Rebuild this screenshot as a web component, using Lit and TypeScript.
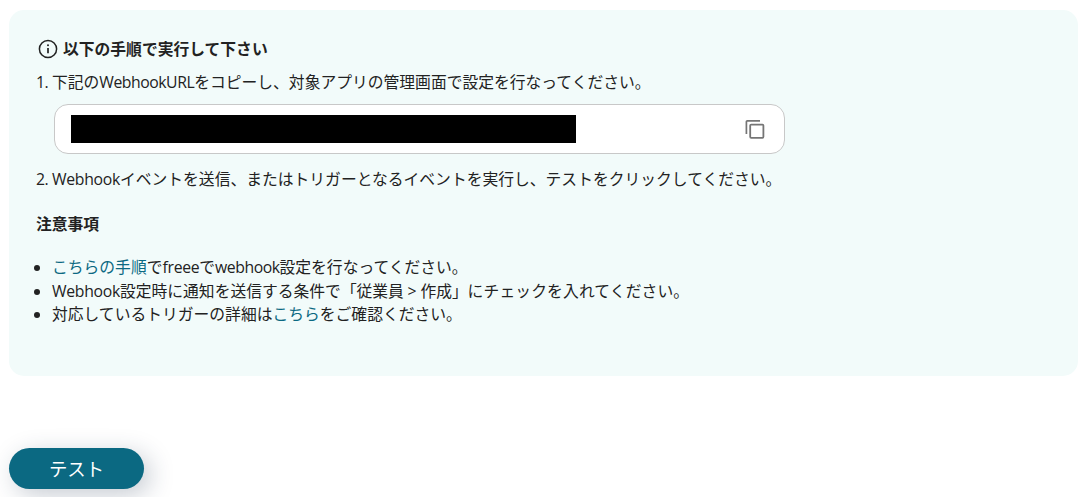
import { LitElement, html, css, svg } from "lit";

const infoIcon = svg`
  <circle cx="10" cy="10" r="8.6" fill="none" stroke="currentColor" stroke-width="1.5" />
  <path d="M10 9v5.2" stroke="currentColor" stroke-width="1.7" />
  <circle cx="10" cy="6.2" r="1" fill="currentColor" />
`;

const copyIcon = svg`
  <path d="M1.4 15V2.9q0-1 1-1H15" fill="none" stroke="currentColor" stroke-width="1.7" />
  <rect x="5.2" y="5.6" width="13.2" height="13.2" rx="1" fill="none" stroke="currentColor" stroke-width="1.8" />
`;

export class AppRoot extends LitElement {

  static get styles() {
    return css`
      :host {
        display: block;
        height: 497px;
        overflow: hidden;
        box-sizing: border-box;
        padding: 10px 8px 0 9px;
        background: #fff;
        color: #222;
        font-family: "Open Sans", "Noto Sans CJK JP", sans-serif;
        font-size: 15.79px;
        line-height: 24px;
        white-space: nowrap;
      }
      .card {
        box-sizing: border-box;
        height: 366px;
        padding: 27px;
        border-radius: 15px;
        background: #f2fbfa;
      }
      .title {
        display: flex;
        align-items: center;
        gap: 5px;
        font-weight: bold;
      }
      .title svg {
        width: 20px;
        height: 20px;
        margin-left: 2px;
      }
      .step {
        display: flex;
        margin-top: 9px;
      }
      .number {
        flex: none;
        width: 16px;
        letter-spacing: -0.5px;
      }
      .latin {
        letter-spacing: -0.3px;
      }
      .name {
        letter-spacing: -0.47px;
      }
      .choice {
        letter-spacing: -0.1px;
      }
      .after {
        letter-spacing: 0.12px;
      }
      .url {
        display: flex;
        align-items: center;
        justify-content: space-between;
        box-sizing: border-box;
        width: 731px;
        height: 50px;
        margin: 10px 0 0 18px;
        padding: 0 19px 0 16px;
        border: 1px solid #c8c8c8;
        border-radius: 14px;
        background: #fff;
      }
      .mask {
        width: 505px;
        height: 28px;
        background: #000;
      }
      .url svg {
        width: 20px;
        height: 20px;
        color: #757575;
      }
      .url + .step {
        margin-top: 13px;
      }
      .notes {
        margin-top: 21px;
        font-weight: bold;
      }
      ul {
        margin: 20px 0 0;
        padding: 0;
        list-style: none;
        line-height: 23.5px;
      }
      li {
        display: flex;
      }
      li::before {
        content: "";
        flex: none;
        width: 6px;
        height: 6px;
        margin: 9px 12px 0 -2px;
        border-radius: 50%;
        background: currentColor;
      }
      a {
        color: #0b6982;
        text-decoration: none;
      }
      button {
        display: block;
        width: 135px;
        height: 41px;
        margin-top: 72px;
        padding: 0;
        border: 0;
        border-radius: 21px;
        background: #0b6982;
        box-shadow: 6px 6px 24px rgba(33, 50, 80, 0.25);
        color: #fff;
        font: inherit;
        font-size: 18.4px;
      }
    `;
  }

  render() {
    return html`
      <div class="card">
        <div class="title">
          <svg viewBox="0 0 20 20">${infoIcon}</svg>
          <span>以下の手順で実行して下さい</span>
        </div>
        <div class="step">
          <span class="number">1.</span>
          <span>下記の<span class="name">WebhookURL</span>をコピーし、対象アプリの管理画面で設定を行なってください。</span>
        </div>
        <div class="url">
          <div class="mask"></div>
          <svg viewBox="0 0 20 20">${copyIcon}</svg>
        </div>
        <div class="step">
          <span class="number">2.</span>
          <span><span class="latin">Webhook</span>イベントを送信、またはトリガーとなるイベントを実行し、テストをクリックしてください。</span>
        </div>
        <div class="notes">注意事項</div>
        <ul>
          <li><span><a>こちらの手順</a>で<span class="latin">freee</span>で<span class="name">webhook</span>設定を行なってください。</span></li>
          <li><span><span class="latin">Webhook</span>設定時に通知を送信する条件で<span class="choice">「従業員 &gt; 作成」</span><span class="after">にチェックを入れてください。</span></span></li>
          <li><span>対応しているトリガーの詳細は<a>こちら</a>をご確認ください。</span></li>
        </ul>
      </div>
      <button>テスト</button>
    `;
  }

  static get tag() {
    return "app-root";
  }
}
customElements.define(AppRoot.tag, AppRoot);
